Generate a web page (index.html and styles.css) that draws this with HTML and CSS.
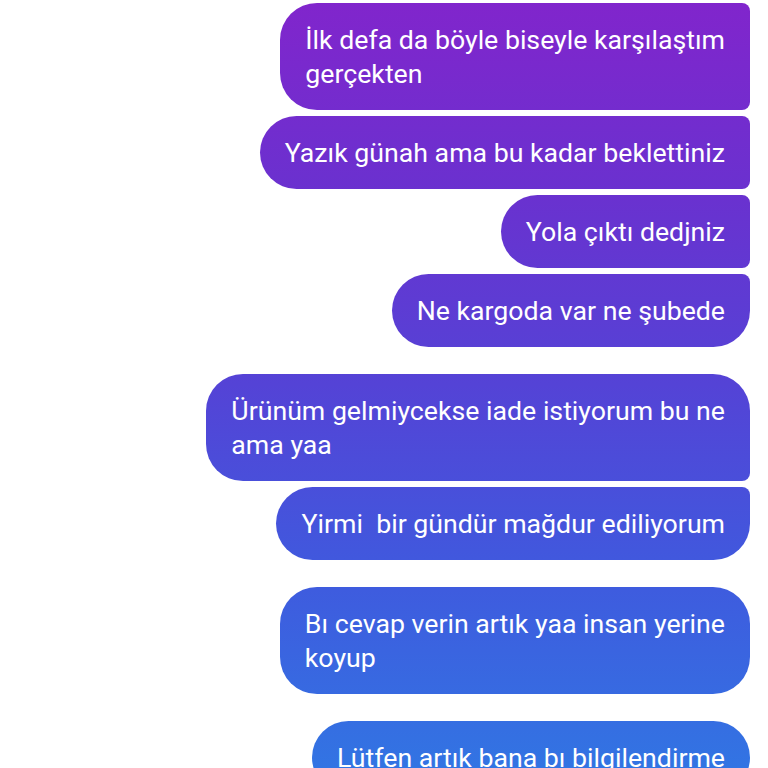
FILE: index.html
```html
<!DOCTYPE html>
<html lang="tr">

<head>
    <meta charset="UTF-8">
    <meta name="viewport" content="width=device-width, initial-scale=1.0">
    <title>Mesajlar</title>
    <link rel="stylesheet" href="styles.css">
</head>

<body>
    <div class="thread">
        <!-- first group -->
        <div class="group">
            <div class="bubble">İlk defa da böyle biseyle karşılaştım<br>gerçekten</div>
            <div class="bubble">Yazık günah ama bu kadar beklettiniz</div>
            <div class="bubble">Yola çıktı dedjniz</div>
            <div class="bubble">Ne kargoda var ne şubede</div>
        </div>

        <!-- second group -->
        <div class="group">
            <div class="bubble">Ürünüm gelmiycekse iade istiyorum bu ne<br>ama yaa</div>
            <div class="bubble">Yirmi&nbsp; bir gündür mağdur ediliyorum</div>
        </div>

        <div class="group">
            <div class="bubble">Bı cevap verin artık yaa insan yerine<br>koyup</div>
        </div>

        <div class="group">
            <div class="bubble">Lütfen artık bana bı bilgilendirme</div>
        </div>
    </div>
</body>

</html>
```

FILE: styles.css
```css
body {
    font-family: Roboto, "Noto Sans", Arial, sans-serif;
    background-color: #fff;
    margin: 0;
    padding: 0;
}

.thread {
    display: flex;
    flex-direction: column;
    gap: 27px;
    padding: 3px 18px 0 0;
}

.group {
    display: flex;
    flex-direction: column;
    align-items: flex-end;
    gap: 6px;
}

.bubble {
    font-size: 26.7px;
    line-height: 34px;
    color: #fff;
    padding: 20px 25px 19px 25px;
    border-radius: 37px 8px 8px 37px;
    background: linear-gradient(180deg, #8125cc 0%, #6a31cf 25%, #5443d6 50%, #3f5ade 75%, #3274e3 100%);
    background-attachment: fixed;
}

.group:first-child .bubble:last-child {
    border-bottom-right-radius: 37px;
}

.group:nth-child(2) .bubble:first-child {
    border-top-right-radius: 37px;
}

.group:nth-child(2) .bubble:last-child {
    border-bottom-right-radius: 37px;
}

.group:nth-child(3) .bubble,
.group:nth-child(4) .bubble {
    border-radius: 37px;
}
```
